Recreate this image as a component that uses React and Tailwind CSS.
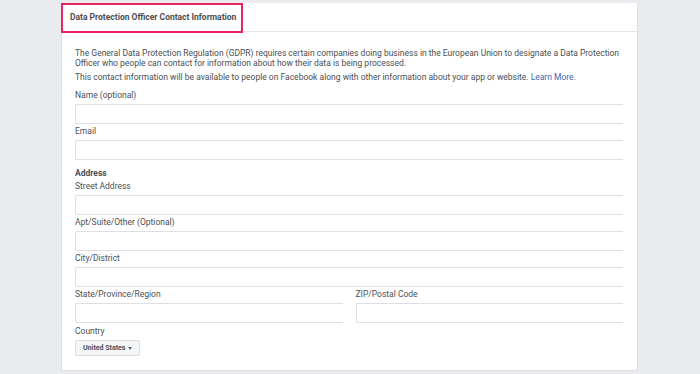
import React from 'react';

const font = { fontFamily: 'Roboto, "Noto Sans", sans-serif' };

function Field({ label, className = '' }) {
    return (
        <div className={className}>
            <label className="block text-[8.5px] leading-[12px] text-[#4b4f56] mb-[3px]">{label}</label>
            <div className="h-[20px] bg-white border border-r-0 border-[#dddfe2] rounded-l-[2px]" />
        </div>
    );
}

export default function App() {
    return (
        <div className="min-h-screen w-[700px] h-[374px] overflow-hidden bg-[#e9ebee] pt-[3px]" style={font}>
            <div className="ml-[61px] w-[577px] bg-white border border-t-0 border-[#dddfe2] rounded-b-[3px]">
                {/* Header */}
                <div className="relative h-[29px] border-b border-[#e5e6e9] flex items-center pl-[8px]">
                    <h2 className="text-[8.5px] font-bold text-[#4b4f56]">
                        Data Protection Officer Contact Information
                    </h2>
                    <div className="absolute left-[-1px] top-0 w-[182px] h-[30px] border-2 border-[#e8265d]" />
                </div>

                <div className="pl-[13px] pr-[14px] pt-[16px] pb-[14px]">
                    <p className="text-[8.5px] leading-[10px] text-[#4b4f56] whitespace-nowrap">
                        The General Data Protection Regulation (GDPR) requires certain companies doing business in the European Union to designate a Data Protection
                        <br />
                        Officer who people can contact for information about how their data is being processed.
                    </p>
                    <p className="mt-[4px] text-[8.5px] leading-[10px] text-[#4b4f56] whitespace-nowrap">
                        This contact information will be available to people on Facebook along with other information about your app or website.{' '}
                        <a className="text-[#4267b2]">Learn More.</a>
                    </p>

                    <div className="mt-[7px] flex flex-col gap-[1px]">
                        <Field label="Name (optional)" />
                        <Field label="Email" />
                        <div className="mt-[6px] text-[8.5px] leading-[12px] font-bold text-[#4b4f56]">Address</div>
                        <Field label="Street Address" />
                        <Field label="Apt/Suite/Other (Optional)" />
                        <Field label="City/District" />
                        <div className="grid grid-cols-2 gap-[13px]">
                            <div>
                                <label className="block text-[8.5px] leading-[12px] text-[#4b4f56] mb-[3px]">State/Province/Region</label>
                                <div className="h-[20px] bg-white border border-r-0 border-[#dddfe2] rounded-l-[2px]" />
                            </div>
                            <Field label="ZIP/Postal Code" />
                        </div>
                        <div className="mt-[1px]">
                            <label className="block text-[8.5px] leading-[12px] text-[#4b4f56] mb-[3px]">Country</label>
                            <button className="h-[16px] w-[65px] pl-[7px] flex items-center gap-[3px] bg-[#f5f6f7] border border-[#dadde1] rounded-[2px] text-[7px] font-bold text-[#4b4f56]">
                                United States
                                <span className="w-0 h-0 border-l-[2.5px] border-r-[2.5px] border-t-[3px] border-l-transparent border-r-transparent border-t-[#606770]" />
                            </button>
                        </div>
                    </div>
                </div>
            </div>
        </div>
    );
}
